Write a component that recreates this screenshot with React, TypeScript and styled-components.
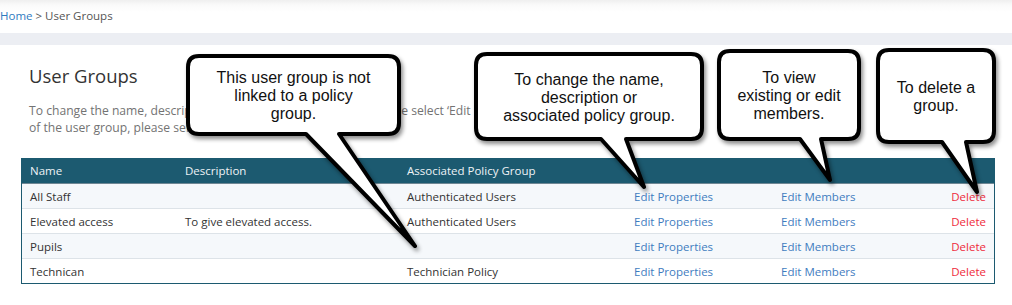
import React from "react";
import styled, { createGlobalStyle } from "styled-components";

const Global = createGlobalStyle`
  html, body { margin: 0; padding: 0; background: #fff; }
  body { font-family: "Open Sans", "Noto Sans", sans-serif; }
`;

const Page = styled.div`
  position: relative;
  width: 1012px;
  height: 305px;
  overflow: hidden;
  background: #fff;
`;

const TopBar = styled.header`
  height: 33px;
  display: flex;
  align-items: flex-start;
  background: linear-gradient(#efefef 0px, #fafafa 5px, #ffffff 12px);
`;

const Breadcrumb = styled.nav`
  margin-top: 8px;
  font-size: 11.5px;
  line-height: 16px;
  color: #555;
`;

const Crumb = styled.a`
  color: #2f7bbf;
  text-decoration: none;
`;

const Band = styled.div`
  height: 12px;
  background: #eceef3;
`;

const Content = styled.main`
  padding: 18px 19px 0 21px;
`;

const Title = styled.h1`
  margin: 0 0 0 8px;
  font-size: 18.5px;
  line-height: 26px;
  font-weight: 400;
  color: #333;
`;

const Intro = styled.p`
  margin: 13px 0 0 8px;
  font-size: 12.15px;
  line-height: 17px;
  color: #737373;
`;

const Table = styled.div`
  margin-top: 22px;
  width: 972px;
  border: 1.5px solid #1c5a70;
  border-top: none;
`;

const Row = styled.div<{ $head?: boolean; $alt?: boolean }>`
  display: grid;
  grid-template-columns: 155px 222px 227px 147px 1fr 90px;
  height: 25px;
  align-items: center;
  font-size: 11.5px;
  background: ${(p) => (p.$head ? "#1c5a70" : p.$alt ? "#f5f8fb" : "#ffffff")};
  color: ${(p) => (p.$head ? "#eef3f6" : "#333")};
  border-top: ${(p) => (p.$head ? "none" : "1px solid #dde3e8")};
  box-sizing: border-box;
  &:nth-child(2) {
    border-top: 1px solid #6f8794;
  }
`;

const Cell = styled.div<{ $kind?: "link" | "danger"; $right?: boolean }>`
  padding: 0 8px;
  white-space: nowrap;
  text-align: ${(p) => (p.$right ? "right" : "left")};
  color: ${(p) =>
    p.$kind === "link" ? "#3f7dbf" : p.$kind === "danger" ? "#ef2a3c" : "inherit"};
`;

const CalloutBox = styled.div<{ $x: number; $y: number; $w: number; $h: number }>`
  position: absolute;
  left: ${(p) => p.$x}px;
  top: ${(p) => p.$y}px;
  width: ${(p) => p.$w}px;
  height: ${(p) => p.$h}px;
  display: flex;
  align-items: center;
  justify-content: center;
  z-index: 5;
`;

const CalloutShape = styled.svg`
  position: absolute;
  left: 0;
  top: 0;
  overflow: visible;
  filter: drop-shadow(2px 3px 2px rgba(0, 0, 0, 0.45));
`;

const CalloutText = styled.div`
  position: relative;
  font-family: "Liberation Sans", Arial, sans-serif;
  font-size: 16px;
  line-height: 18px;
  color: #111;
  text-align: center;
  margin-top: 2px;
`;

type CalloutProps = {
  x: number;
  y: number;
  w: number;
  h: number;
  b1: number;
  b2: number;
  tx: number;
  ty: number;
  lines: string[];
};

function Callout({ x, y, w, h, b1, b2, tx, ty, lines }: CalloutProps) {
  const r = 11;
  const d = `M ${r} 0 H ${w - r} Q ${w} 0 ${w} ${r} V ${h - r} Q ${w} ${h} ${w - r} ${h} H ${b2 - x} L ${tx - x} ${ty - y} L ${b1 - x} ${h} H ${r} Q 0 ${h} 0 ${h - r} V ${r} Q 0 0 ${r} 0 Z`;
  return (
    <CalloutBox $x={x} $y={y} $w={w} $h={h}>
      <CalloutShape width={w} height={h}>
        <path d={d} fill="#fff" stroke="#000" strokeWidth={4} strokeLinejoin="round" />
      </CalloutShape>
      <CalloutText>
        {lines.map((l, i) => (
          <React.Fragment key={i}>
            {l}
            {i < lines.length - 1 && <br />}
          </React.Fragment>
        ))}
      </CalloutText>
    </CalloutBox>
  );
}

const rows = [
  { name: "All Staff", desc: "", policy: "Authenticated Users" },
  { name: "Elevated access", desc: "To give elevated access.", policy: "Authenticated Users" },
  { name: "Pupils", desc: "", policy: "" },
  { name: "Technican", desc: "", policy: "Technician Policy" },
];

export default function App() {
  return (
    <Page>
      <Global />
      <TopBar>
        <Breadcrumb>
          <Crumb href="#">Home</Crumb> &gt; User Groups
        </Breadcrumb>
      </TopBar>
      <Band />
      <Content>
        <Title>User Groups</Title>
        <Intro>
          To change the name, description or associated policy group, please select ‘Edit
          Properties’. To view or edit the members
          <br />
          of the user group, please select ‘Edit Members’.
        </Intro>
        <Table>
          <Row $head>
            <Cell>Name</Cell>
            <Cell>Description</Cell>
            <Cell>Associated Policy Group</Cell>
            <Cell />
            <Cell />
            <Cell />
          </Row>
          {rows.map((r, i) => (
            <Row key={r.name} $alt={i % 2 === 0}>
              <Cell>{r.name}</Cell>
              <Cell>{r.desc}</Cell>
              <Cell>{r.policy}</Cell>
              <Cell $kind="link">Edit Properties</Cell>
              <Cell $kind="link">Edit Members</Cell>
              <Cell $kind="danger" $right>
                Delete
              </Cell>
            </Row>
          ))}
        </Table>
      </Content>

      <Callout
        x={188}
        y={56}
        w={211}
        h={78}
        b1={306}
        b2={339}
        tx={415}
        ty={246}
        lines={["This user group is not", "linked to a policy", "group."]}
      />
      <Callout
        x={476}
        y={54}
        w={226}
        h={85}
        b1={601}
        b2={626}
        tx={644}
        ty={187}
        lines={["To change the name,", "description or", "associated policy group."]}
      />
      <Callout
        x={719}
        y={51}
        w={140}
        h={88}
        b1={800}
        b2={821}
        tx={830}
        ty={180}
        lines={["To view", "existing or edit", "members."]}
      />
      <Callout
        x={878}
        y={50}
        w={116}
        h={92}
        b1={942}
        b2={966}
        tx={977}
        ty={192}
        lines={["To delete a", "group."]}
      />
    </Page>
  );
}
